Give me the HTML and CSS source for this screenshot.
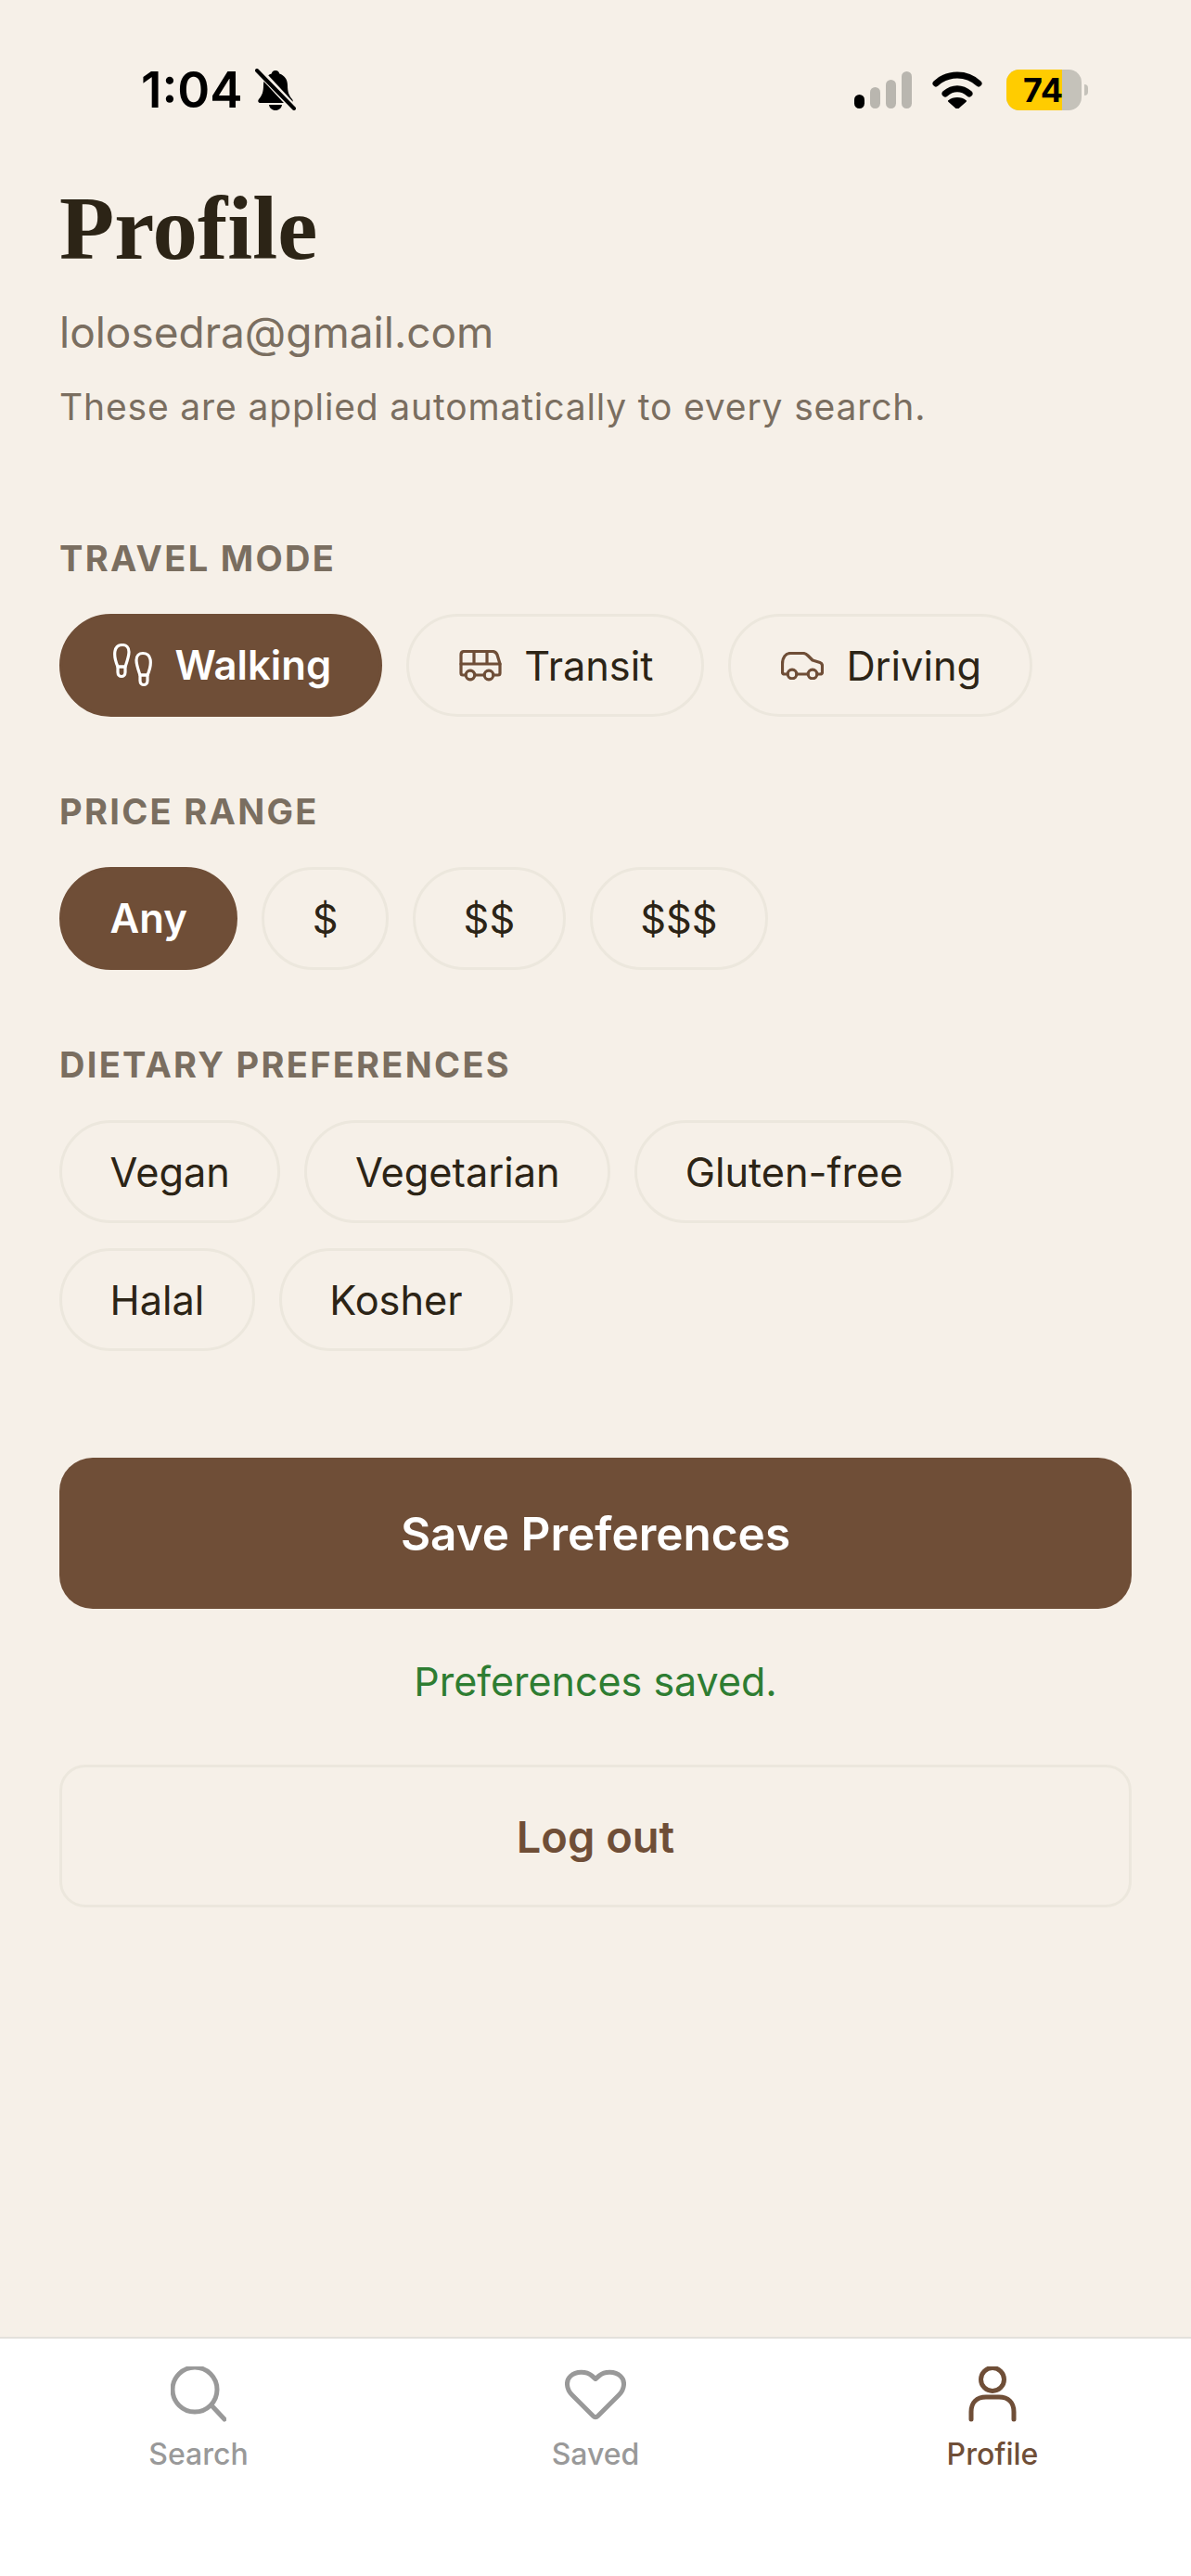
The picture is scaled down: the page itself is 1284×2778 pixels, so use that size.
FILE: index.html
```html
<!DOCTYPE html>
<html lang="en">
<head>
  <meta charset="UTF-8" />
  <meta name="viewport" content="width=device-width, initial-scale=1" />
  <title>Profile</title>
  <link rel="stylesheet" href="styles.css">
</head>
<body>
  <div class="screen">

    <!-- Status bar -->
    <div class="status-bar">
      <div class="status-left">
        <span class="clock">1:04</span>
        <svg class="bell" viewBox="0 0 44 46" width="44" height="46">
          <path d="M22 2c2.500 0 4 1.700 4.300 3.600C32 7.500 35 12 35 18c0 7 1.500 11 5 15 1.500 1.800.6 4-2 4H6c-2.600 0-3.500-2.200-2-4 3.500-4 5-8 5-15 0-6 3-10.500 8.700-12.400C18 3.700 19.500 2 22 2z" fill="#000"/>
          <path d="M15 39h14c-.5 3.500-3.300 6-7 6s-6.500-2.500-7-6z" fill="#000"/>
          <path d="M3 1l39 42" stroke="#f6f0e8" stroke-width="8"/>
          <path d="M2 2l40 41" stroke="#000" stroke-width="4" stroke-linecap="round"/>
        </svg>
      </div>
      <div class="status-right">
        <svg viewBox="0 0 62 40" width="62" height="40">
          <rect x="0" y="25" width="11" height="15" rx="5.500" fill="#000"/>
          <rect x="17" y="17" width="11" height="23" rx="5.500" fill="#b9b6af"/>
          <rect x="34" y="9" width="11" height="31" rx="5.500" fill="#b9b6af"/>
          <rect x="51" y="0" width="11" height="40" rx="5.500" fill="#b9b6af"/>
        </svg>
        <svg class="wifi" viewBox="0 0 54 40" width="54" height="40">
          <path d="M4 13C17 1 37 1 50 13" fill="none" stroke="#000" stroke-width="7" stroke-linecap="round"/>
          <path d="M14 24c8-7 18-7 26 0" fill="none" stroke="#000" stroke-width="7" stroke-linecap="round"/>
          <path d="M27 40l-9-8c5-4 13-4 18 0z" fill="#000" stroke="#000" stroke-width="2" stroke-linejoin="round"/>
        </svg>
        <div class="battery">
          <div class="battery-body"><div class="battery-fill"></div><span class="battery-num">74</span></div>
          <div class="battery-tip"></div>
        </div>
      </div>
    </div>

    <div class="content">
      <h1 class="page-title">Profile</h1>
      <p class="email">lolosedra@gmail.com</p>
      <p class="subtitle">These are applied automatically to every search.</p>

      <section class="pref-group">
        <h2 class="pref-label">TRAVEL MODE</h2>
        <div class="chips">
          <button class="chip selected">
            <svg class="chip-icon" viewBox="0 0 43 48" width="43" height="48" fill="none" stroke="#fff" stroke-width="3.200" stroke-linecap="round" stroke-linejoin="round">
              <path d="M5 25C2 18 1 13 2 8 3 3 7 1.500 10 1.500 14 1.500 17 4 17 9c0 5-2 10-4 16z"/>
              <path d="M5 25h8v6c0 6-8 6-8 0z"/>
              <path d="M37 34c3-7 4-12 3-17-1-5-5-6.500-8-6.500-4 0-7 2.500-7 7.500 0 5 2 10 4 16z"/>
              <path d="M29 34h8v6c0 6-8 6-8 0z"/>
            </svg>
            Walking
          </button>
          <button class="chip">
            <svg class="chip-icon" viewBox="0 0 46 34" width="46" height="34" fill="none" stroke="#6f4e37" stroke-width="3.200" stroke-linecap="round" stroke-linejoin="round">
              <path d="M7 27H4c-1.500 0-2-1-2-2V5c0-2 1-3.500 3.500-3.500H36c2.500 0 4 1.500 5 3.500l3 10v10c0 1-.5 2-2 2h-5"/>
              <path d="M2 15h42M16 1.500V15M30 1.500V15"/>
              <path d="M17 27h10"/>
              <circle cx="12" cy="27" r="4.800"/>
              <circle cx="32" cy="27" r="4.800"/>
            </svg>
            Transit
          </button>
          <button class="chip">
            <svg class="chip-icon" viewBox="0 0 46 30" width="46" height="30" fill="none" stroke="#6f4e37" stroke-width="3.200" stroke-linecap="round" stroke-linejoin="round">
              <path d="M7 24H4c-1.500 0-2.500-1-2.500-2v-9C1.500 6 5 1.500 10 1.500h14c2 0 3.500 1 5 2.500l5 5 8 2.500c1.500.5 2.500 2 2.500 3.500V22c0 1-1 2-2.500 2h-3"/>
              <path d="M17 24h12"/>
              <circle cx="12" cy="24" r="4.800"/>
              <circle cx="34" cy="24" r="4.800"/>
            </svg>
            Driving
          </button>
        </div>
      </section>

      <section class="pref-group">
        <h2 class="pref-label">PRICE RANGE</h2>
        <div class="chips">
          <button class="chip selected">Any</button>
          <button class="chip">$</button>
          <button class="chip">$$</button>
          <button class="chip">$$$</button>
        </div>
      </section>

      <section class="pref-group">
        <h2 class="pref-label">DIETARY PREFERENCES</h2>
        <div class="chips">
          <button class="chip">Vegan</button>
          <button class="chip">Vegetarian</button>
          <button class="chip">Gluten-free</button>
          <button class="chip">Halal</button>
          <button class="chip">Kosher</button>
        </div>
      </section>

      <button class="save-btn">Save Preferences</button>
      <p class="saved-msg">Preferences saved.</p>
      <button class="logout-btn">Log out</button>
    </div>

    <!-- Bottom tabs -->
    <nav class="tab-bar">
      <div class="tab">
        <svg viewBox="0 0 60 60" width="60" height="60" fill="none" stroke="#999" stroke-width="5" stroke-linecap="round">
          <circle cx="26" cy="25" r="24"/>
          <path d="M44 42l14 15"/>
        </svg>
        <span>Search</span>
      </div>
      <div class="tab">
        <svg viewBox="0 0 66 60" width="66" height="60" fill="none" stroke="#999" stroke-width="5" stroke-linejoin="round">
          <path d="M30.500 53.500L8 31C1 24 1 15 6 10.500 12 5 23 5 29 10l4 3.500 4-3.500c6-5 17-5 23 .5 5 4.500 5 13.500-2 20.500L35.500 53.500c-1.500 1.500-3.500 1.500-5 0z"/>
        </svg>
        <span>Saved</span>
      </div>
      <div class="tab active">
        <svg viewBox="0 0 60 60" width="60" height="60" fill="none" stroke="#6f4e37" stroke-width="5" stroke-linecap="round">
          <circle cx="30" cy="14" r="12.500"/>
          <path d="M7 57v-8c0-10 6-16 16-16h14c10 0 16 6 16 16v8"/>
        </svg>
        <span>Profile</span>
      </div>
    </nav>
  </div>
</body>
</html>
```

FILE: styles.css
```css
:root {
  --bg-color: #f6f0e8;
  --brown: #6f4e37;
  --text-color: #2c2416;
  --muted: #7a6e60;
  --chip-border: #ece7dd;
}

* {
  box-sizing: border-box;
}

html, body {
  margin: 0;
  height: 100%;
}

body {
  font-family: Inter, 'Noto Sans', sans-serif;
  background: var(--bg-color);
  color: var(--text-color);
}

.screen {
  height: 2778px;
  display: flex;
  flex-direction: column;
}

/* Status bar */
.status-bar {
  display: flex;
  justify-content: space-between;
  align-items: center;
  height: 64px;
  margin-top: 65px;
  padding: 0 111px 0 152px;
}

.status-left {
  display: flex;
  align-items: center;
  gap: 13px;
}

.clock {
  font-size: 53px;
  font-weight: 600;
  color: #000;
}

.status-right {
  display: flex;
  align-items: center;
  gap: 22px;
}

.battery {
  display: flex;
  align-items: center;
  gap: 3px;
  margin-left: 4px;
}

.battery-body {
  position: relative;
  width: 81px;
  height: 44px;
  border-radius: 14px;
  background: #c5c2ba;
  overflow: hidden;
}

.battery-fill {
  width: 60px;
  height: 100%;
  background: #ffcc00;
}

.battery-num {
  position: absolute;
  top: 0;
  left: 18px;
  line-height: 44px;
  font-size: 36px;
  font-weight: 700;
  color: #000;
}

.battery-tip {
  width: 4px;
  height: 12px;
  background: #c5c2ba;
  border-radius: 0 6px 6px 0;
}

/* Main content */
.content {
  flex: 1;
  padding: 0 64px;
}

.page-title {
  font-family: 'Liberation Serif', serif;
  font-size: 97px;
  font-weight: 700;
  line-height: 110px;
  margin: 63px 0 0;
}

.email {
  font-size: 46px;
  line-height: 56px;
  margin: 28px 0 0;
  color: var(--muted);
}

.subtitle {
  font-size: 39px;
  line-height: 48px;
  letter-spacing: 0.850px;
  margin: 29px 0 117px;
  color: var(--muted);
}

.pref-group {
  margin-top: 80px;
}

.pref-label {
  font-size: 38px;
  font-weight: 700;
  line-height: 44px;
  letter-spacing: 2.300px;
  margin: 0 0 38px;
  color: var(--muted);
}

.chips {
  display: flex;
  flex-wrap: wrap;
  gap: 27px 26px;
}

.chip {
  display: flex;
  align-items: center;
  gap: 24px;
  height: 111px;
  padding: 0 51.500px;
  border: 3px solid var(--chip-border);
  border-radius: 56px;
  background: transparent;
  font-family: inherit;
  font-size: 43.300px;
  color: var(--text-color);
}

.chip.selected {
  background: var(--brown);
  border-color: var(--brown);
  color: #fff;
  font-size: 43.600px;
  font-weight: 600;
}

.chip-icon {
  margin-left: 3px;
}

.save-btn {
  display: block;
  width: 100%;
  height: 163px;
  margin-top: 115px;
  border: none;
  border-radius: 36px;
  background: var(--brown);
  color: #fff;
  font-family: inherit;
  font-size: 49.500px;
  font-weight: 600;
}

.saved-msg {
  margin: 50px 0 0;
  text-align: center;
  font-size: 43px;
  line-height: 56px;
  color: #2e7d32;
}

.logout-btn {
  display: block;
  width: 100%;
  height: 154px;
  margin-top: 62px;
  border: 3px solid var(--chip-border);
  border-radius: 28px;
  background: transparent;
  color: var(--brown);
  font-family: inherit;
  font-size: 47px;
  font-weight: 600;
}

/* Bottom tabs */
.tab-bar {
  display: flex;
  height: 258px;
  padding-top: 30px;
  background: #fff;
  border-top: 2px solid #e3e1dc;
}

.tab {
  flex: 1;
  display: flex;
  flex-direction: column;
  align-items: center;
  gap: 15px;
  height: 130px;
  color: #999;
  font-size: 32px;
  font-weight: 500;
}

.tab.active {
  color: var(--brown);
}
```
